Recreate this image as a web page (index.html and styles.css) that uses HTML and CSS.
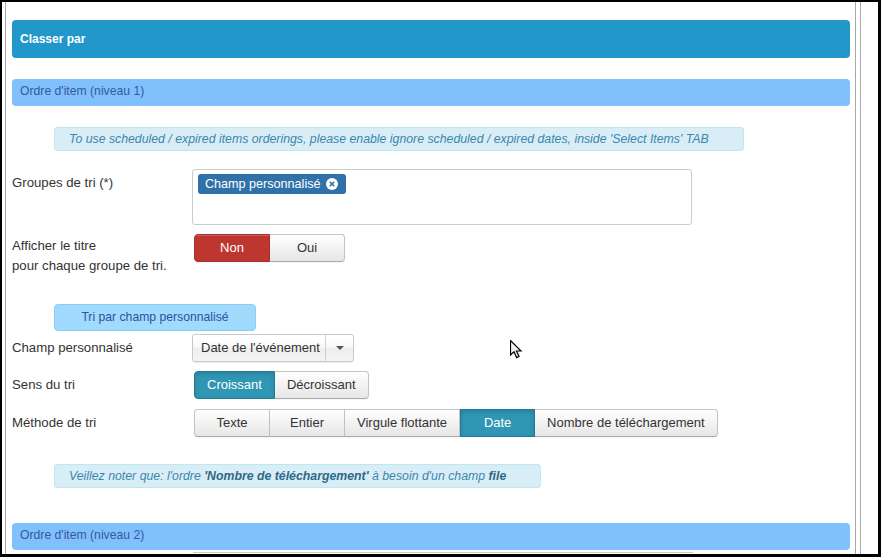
FILE: index.html
```html
<html>
    <head>
        <link rel="stylesheet" href="styles.css">
        <meta charset="utf-8">
        <title>Classer par</title>
    </head>
    <body>
        <div class="frame">
            <div class="panel">
                <div class="titleBar">Classer par</div>
                <div class="levelBar">Ordre d'item (niveau 1)</div>
                <div class="infoBox infoWide">To use scheduled / expired items orderings, please enable ignore scheduled / expired dates, inside 'Select Items' TAB</div>

                <div class="row rowGroups">
                    <label class="label">Groupes de tri (*)</label>
                    <div class="multiBox">
                        <span class="tag">Champ personnalisé
                            <span class="tagClose">
                                <svg width="12" height="12" viewBox="0 0 12 12"><circle cx="6" cy="6" r="6" fill="#fff"/><path d="M3.8 3.8 L8.2 8.2 M8.2 3.8 L3.8 8.2" stroke="#3071a9" stroke-width="1.6"/></svg>
                            </span>
                        </span>
                    </div>
                </div>

                <div class="row rowTitle">
                    <label class="label labelTwo">Afficher le titre<br>pour chaque groupe de tri.</label>
                    <div class="btnGroup">
                        <a class="btn danger">Non</a><a class="btn">Oui</a>
                    </div>
                </div>

                <div class="subHead">Tri par champ personnalisé</div>

                <div class="row rowField">
                    <label class="label">Champ personnalisé</label>
                    <div class="chosen">
                        <span class="chosenText">Date de l'événement</span>
                        <span class="chosenCaret"><b></b></span>
                    </div>
                </div>

                <div class="row rowDir">
                    <label class="label">Sens du tri</label>
                    <div class="btnGroup">
                        <a class="btn info">Croissant</a><a class="btn">Décroissant</a>
                    </div>
                </div>

                <div class="row rowMethod">
                    <label class="label">Méthode de tri</label>
                    <div class="btnGroup">
                        <a class="btn">Texte</a><a class="btn">Entier</a><a class="btn">Virgule flottante</a><a class="btn info">Date</a><a class="btn">Nombre de téléchargement</a>
                    </div>
                </div>

                <div class="infoBox infoNote">Veillez noter que: l'ordre <b>'Nombre de téléchargement'</b> à besoin d'un champ <b>file</b></div>

                <div class="levelBar levelTwo">Ordre d'item (niveau 2)</div>
                <div class="nextField"></div>
            </div>
            <div class="scrollEdge"></div>
        </div>

        <!-- mouse pointer sitting over the form -->
        <svg class="cursor" width="13" height="20" viewBox="0 0 13 20">
            <path d="M0.5 0.5 L0.5 15 L4 11.8 L6.6 17.6 L9 16.5 L6.5 11 L11 11 Z" fill="#f2f2f2" stroke="#000" stroke-width="1.2" stroke-linejoin="miter"/>
        </svg>
    </body>
</html>
```

FILE: styles.css
```css
html, body {margin: 0; padding: 0; background: #fff;}
body {font-family: "Liberation Sans", Arial, sans-serif; font-size: 13px; color: #333;}

.frame {
    position: relative;
    width: 881px;
    height: 557px;
    box-sizing: border-box;
    border-style: solid;
    border-color: #000;
    border-width: 2px 3px 3px 2px;
    display: flex;
    overflow: hidden;
    background: #fff;
}

.panel {
    width: 851px;
    box-sizing: border-box;
    margin-left: 3px;
    border-left: 1px solid #a9a9a9;
    border-right: 1px solid #a9a9a9;
    padding: 18px 5px 0 6px;
    display: flex;
    flex-direction: column;
    flex-shrink: 0;
}

.scrollEdge {
    margin-left: 4px;
    border-left: 1px solid #a9a9a9;
    flex: 1;
}

.titleBar {
    height: 38px;
    line-height: 38px;
    padding: 0 8px;
    background: #2297c9;
    border-radius: 4px;
    color: #fff;
    font-weight: bold;
    font-size: 12px;
}

.levelBar {
    margin-top: 21px;
    height: 27px;
    flex-shrink: 0;
    line-height: 25px;
    padding: 0 8px;
    background: #80c0fc;
    border-radius: 4px;
    color: #3857a2;
    font-size: 12.2px;
}
.levelTwo {margin-top: 35px;}

.nextField {
    margin: 2px 0 0 181px;
    width: 500px;
    height: 4px;
    flex-shrink: 0;
    border-top: 1px solid #ccc;
}

.infoBox {
    height: 24px;
    flex-shrink: 0;
    line-height: 22px;
    box-sizing: border-box;
    margin-left: 42px;
    padding: 0 14px;
    background: #d9edf7;
    border: 1px solid #bce8f1;
    border-radius: 3px;
    color: #3a87ad;
    font-style: italic;
    font-size: 12.3px;
    white-space: nowrap;
}
.infoBox b {color: #2d6987;}
.infoWide {margin-top: 21px; width: 690px;}
.infoNote {margin-top: 27px; width: 487px;}

.row {display: flex; align-items: flex-start; flex-shrink: 0;}
.label {width: 180px; flex-shrink: 0; padding-top: 4px; line-height: 20px; font-size: 13.2px;}
.labelTwo {padding-top: 2px;}

.rowGroups {margin-top: 18px;}
.rowTitle {margin-top: 9px;}
.rowField {margin-top: 3px;}
.rowDir {margin-top: 9px;}
.rowMethod {margin-top: 10px;}

.multiBox {
    width: 500px;
    height: 56px;
    box-sizing: border-box;
    border: 1px solid #ccc;
    border-radius: 3px;
    padding: 4px 5px;
}

.tag {
    display: inline-flex;
    align-items: center;
    gap: 5px;
    height: 20px;
    padding: 0 8px 0 7px;
    background: #3071a9;
    border-radius: 3px;
    color: #fff;
    font-size: 12.6px;
}
.tagClose {display: flex;}

.btnGroup {display: flex; margin-left: 2px;}

.btn {
    display: block;
    min-width: 76px;
    height: 28px;
    box-sizing: border-box;
    padding: 0 12px;
    line-height: 26px;
    text-align: center;
    color: #333;
    background: linear-gradient(#ffffff, #e6e6e6);
    border: 1px solid #c4c4c4;
    border-bottom-color: #a9a9a9;
    box-shadow: inset 0 1px 0 rgba(255,255,255,.2), 0 1px 2px rgba(0,0,0,.05);
}
.btn + .btn {border-left: 0; min-width: 75px;}
.btn:first-child {border-radius: 4px 0 0 4px;}
.btn:last-child {border-radius: 0 4px 4px 0;}

.btn.danger {
    background: #bd362f;
    border-color: #a8302a;
    color: #fff;
}
.btn.info {
    background: #2f96b4;
    border-color: #237a93;
    color: #fff;
    box-shadow: inset 0 2px 4px rgba(0,0,0,.15);
}
.btn + .btn.info {border-left: 1px solid #237a93;}

.subHead {
    margin-top: 28px;
    margin-left: 42px;
    width: 202px;
    height: 27px;
    flex-shrink: 0;
    box-sizing: border-box;
    line-height: 25px;
    text-align: center;
    background: #a0dbfd;
    border: 1px solid #8ccdf4;
    border-radius: 4px;
    color: #2f509e;
    font-size: 12.2px;
}

.chosen {
    display: flex;
    width: 162px;
    height: 28px;
    box-sizing: border-box;
    border: 1px solid #c9c9c9;
    border-radius: 3px;
    background: linear-gradient(#fff 20%, #f6f6f6 50%, #eee 52%, #f4f4f4);
    box-shadow: 0 1px 1px rgba(0,0,0,.08);
}
.chosenText {flex: 1; padding-left: 8px; line-height: 26px; white-space: nowrap;}
.chosenCaret {
    width: 27px;
    border-left: 1px solid #d0d0d0;
    display: flex;
    align-items: center;
    justify-content: center;
}
.chosenCaret b {
    width: 0;
    height: 0;
    border-left: 4px solid transparent;
    border-right: 4px solid transparent;
    border-top: 4px solid #555;
}

.cursor {position: absolute; left: 510px; top: 340px;}
```
